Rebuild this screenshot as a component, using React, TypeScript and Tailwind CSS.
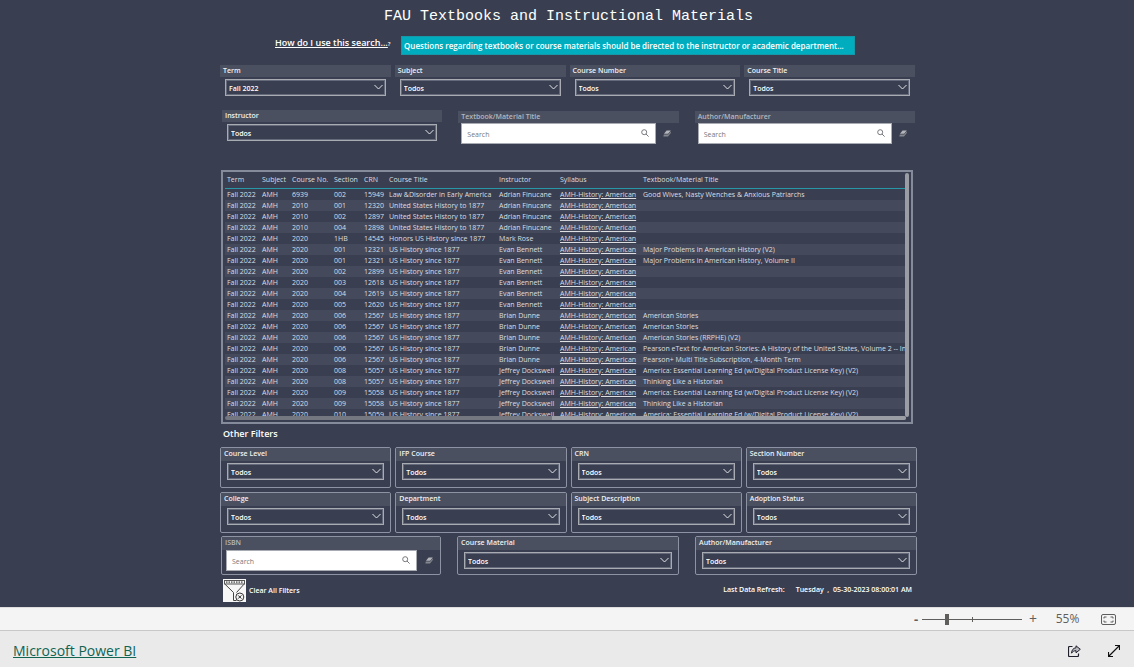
import React from 'react';

const NAV = ['Term', 'Subject', 'Course No.', 'Section', 'CRN', 'Course Title', 'Instructor', 'Syllabus', 'Textbook/Material Title'];

const US = 'US History since 1877';
const UNITED = 'United States History to 1877';
const ESSENTIAL = 'America: Essential Learning Ed (w/Digital Product License Key) (V2)';

// course no, section, crn, course title, instructor, material
const rows = [
  ['6939', '002', '15949', 'Law &Disorder in Early America', 'Adrian Finucane', 'Good Wives, Nasty Wenches & Anxious Patriarchs'],
  ['2010', '001', '12320', UNITED, 'Adrian Finucane', ''],
  ['2010', '002', '12897', UNITED, 'Adrian Finucane', ''],
  ['2010', '004', '12898', UNITED, 'Adrian Finucane', ''],
  ['2020', '1HB', '14545', 'Honors US History since 1877', 'Mark Rose', ''],
  ['2020', '001', '12321', US, 'Evan Bennett', 'Major Problems in American History (V2)'],
  ['2020', '001', '12321', US, 'Evan Bennett', 'Major Problems in American History, Volume II'],
  ['2020', '002', '12899', US, 'Evan Bennett', ''],
  ['2020', '003', '12618', US, 'Evan Bennett', ''],
  ['2020', '004', '12619', US, 'Evan Bennett', ''],
  ['2020', '005', '12620', US, 'Evan Bennett', ''],
  ['2020', '006', '12567', US, 'Brian Dunne', 'American Stories'],
  ['2020', '006', '12567', US, 'Brian Dunne', 'American Stories'],
  ['2020', '006', '12567', US, 'Brian Dunne', 'American Stories (RRPHE) (V2)'],
  ['2020', '006', '12567', US, 'Brian Dunne', 'Pearson eText for American Stories: A History of the United States, Volume 2 -- Instant Access'],
  ['2020', '006', '12567', US, 'Brian Dunne', 'Pearson+ Multi Title Subscription, 4-Month Term'],
  ['2020', '008', '15057', US, 'Jeffrey Dockswell', ESSENTIAL],
  ['2020', '008', '15057', US, 'Jeffrey Dockswell', 'Thinking Like a Historian'],
  ['2020', '009', '15058', US, 'Jeffrey Dockswell', ESSENTIAL],
  ['2020', '009', '15058', US, 'Jeffrey Dockswell', 'Thinking Like a Historian'],
  ['2020', '010', '15059', US, 'Jeffrey Dockswell', ESSENTIAL],
];

const Dropdown = ({ id, value = 'Todos' }: { id: string; value?: string }) => (
  <div className="relative">
    <select
      id={id}
      defaultValue={value}
      className="block h-[17px] w-full appearance-none border border-[#a9abb3] bg-[#393f50] pt-px pl-[3px] text-[7px] leading-[13px] font-semibold text-white shadow-[inset_0_0_0_1px_#646a79]"
    >
      <option>{value}</option>
    </select>
    <svg className="pointer-events-none absolute top-[5px] right-[3px] h-[6px] w-[9px]" viewBox="0 0 9 6" fill="none" stroke="#e4e5e8">
      <path d="M0.5 1l4 4 4-4" />
    </svg>
  </div>
);

const Eraser = () => (
  <svg className="h-[7px] w-[8px]" viewBox="0 0 8 7">
    <path d="M3.6 0.4h4.2L5.2 3.8H1z" fill="#b4b5ba" />
    <path d="M0.8 4.4h4.5L7.8 1.2v1.7L5 6.5H0.4z" fill="#85878f" />
  </svg>
);

const SearchBox = ({ id }: { id: string }) => (
  <div className="flex items-center">
    <div className="relative flex-1">
      <input
        id={id}
        type="text"
        placeholder="Search"
        className="block h-[21px] w-full border border-[#a9abb3] bg-white pt-[2px] pl-[5px] text-[7px] text-[#605e5c] placeholder-[#77787c]"
      />
      <svg className="pointer-events-none absolute top-[6px] right-[7px] h-[8px] w-[8px]" viewBox="0 0 8 8" fill="none" stroke="#77797e">
        <circle cx="3.2" cy="3.2" r="2.5" />
        <path d="M5 5l2.6 2.6" />
      </svg>
    </div>
    <button type="button" aria-label="Clear" className="flex w-[23px] items-center justify-center">
      <Eraser />
    </button>
  </div>
);

const Filter = ({ id, label, value }: { id: string; label: string; value?: string }) => (
  <div>
    <label htmlFor={id} className="block h-[12px] bg-[#4a5060] pl-[3px] text-[7px] leading-[12px] font-semibold text-[#f0f0f2]">{label}</label>
    <div className="mx-[5px] mt-[2px]">
      <Dropdown id={id} value={value} />
    </div>
  </div>
);

const SearchFilter = ({ id, label }: { id: string; label: string }) => (
  <div className="pt-px">
    <label htmlFor={id} className="block h-[12px] bg-[#4a5060] pl-[3px] text-[7px] leading-[12px] font-semibold text-[#b5b8bf]">{label}</label>
    <div className="pl-[3px]">
      <SearchBox id={id} />
    </div>
  </div>
);

const Card = ({ id, label, search }: { id: string; label: string; search?: boolean }) => (
  <div className="h-full rounded-[2px] border border-[#8d93a3]">
    <label
      htmlFor={id}
      className={`block h-[13px] bg-[#4a5060] pl-[3px] text-[7px] leading-[12px] font-semibold ${search ? 'text-[#b5b8bf]' : 'text-[#f0f0f2]'}`}
    >
      {label}
    </label>
    {search ? (
      <div className="pb-[3px] pl-[4px]"><SearchBox id={id} /></div>
    ) : (
      <div className="mx-[6px] mt-[2px]"><Dropdown id={id} /></div>
    )}
  </div>
);

const MaterialsTable = () => (
  <div className="relative h-[254px] border-2 border-[#858b9b] pt-px pr-[5px] pl-[2px]">
    <div className="h-[243px] overflow-hidden">
      <table className="w-full table-fixed text-left text-[7px] text-[#dddee1]">
        <colgroup>
          <col className="w-[35px]" />
          <col className="w-[30px]" />
          <col className="w-[42px]" />
          <col className="w-[30px]" />
          <col className="w-[25px]" />
          <col className="w-[110px]" />
          <col className="w-[61px]" />
          <col className="w-[83px]" />
          <col />
        </colgroup>
        <thead>
          <tr>
            {NAV.map(h => (
              <th key={h} className="h-[15px] border-b border-[#2897a8] p-0 pb-px pl-[2px] font-medium leading-[13px] whitespace-nowrap">{h}</th>
            ))}
          </tr>
        </thead>
        <tbody>
          {rows.map(([no, section, crn, title, instructor, material], i) => (
            <tr key={i} className="leading-[11px] whitespace-nowrap even:bg-[#444a5b]">
              <td className="p-0 pl-[2px]">Fall 2022</td>
              <td className="p-0 pl-[2px]">AMH</td>
              <td className="p-0 pl-[2px]">{no}</td>
              <td className="p-0 pl-[2px]">{section}</td>
              <td className="p-0 pl-[2px]">{crn}</td>
              <td className="p-0 pl-[2px]">{title}</td>
              <td className="p-0 pl-[2px]">{instructor}</td>
              <td className="p-0 pl-[2px]">
                <a href="#syllabus" className="underline">AMH-History: American</a>
              </td>
              <td className="overflow-hidden p-0 pl-[2px]">{material}</td>
            </tr>
          ))}
        </tbody>
      </table>
    </div>
    {/* scrollbars */}
    <div className="absolute top-px right-[2px] bottom-[5px] w-[4px] rounded-full bg-[#9b9da5]" />
    <div className="absolute right-[5px] bottom-[2px] left-[2px] flex h-[4px] overflow-hidden rounded-full bg-[#747780]">
      <div className="ml-auto w-[52%] bg-[#9b9da5]" />
    </div>
  </div>
);

const ClearFiltersIcon = () => (
  <svg className="h-[23px] w-[23px]" viewBox="0 0 23 23" fill="none">
    <rect width="23" height="23" fill="#f7f7f7" />
    <rect x="1.5" y="1.5" width="20" height="3.5" stroke="#555" />
    <path d="M3 3.3h17" stroke="#777" strokeWidth="2" strokeDasharray="1.5 1" />
    <path d="M2 5.2l8.5 8.3v8h3M21 5.2l-7.5 8.3" stroke="#444" />
    <circle cx="16.8" cy="18" r="4" fill="#f7f7f7" stroke="#333" />
    <path d="M15.2 16.4l3.2 3.2M18.4 16.4l-3.2 3.2" stroke="#222" />
  </svg>
);

export default function App() {
  return (
    <div className="flex min-h-screen flex-col bg-[#eaeaea] font-['Open_Sans','Noto_Sans',sans-serif]">
      <main className="bg-[#393f50] pb-[5px]">
        <div className="mx-auto w-full max-w-[704px] pr-[2px] pl-[5px]">
          <h1 className="pt-[7px] text-center font-['Courier_New','Liberation_Mono',monospace] text-[15px] leading-5 text-white">
            FAU Textbooks and Instructional Materials
          </h1>
          <div className="mt-[9px] flex items-center pl-[55px]">
            <a href="#help" className="w-[126px] pb-[4px] text-[9px] leading-[14px] font-semibold whitespace-nowrap text-white">
              <span className="underline">How do I use this search...</span><span className="text-[6px]">?</span>
            </a>
            <p className="w-[454px] border border-[#1599a9] bg-[#00adbe] pl-[2px] text-[8px] leading-[17px] font-semibold whitespace-nowrap text-white">
              Questions regarding textbooks or course materials should be directed to the instructor or academic department...
            </p>
          </div>

          <div className="mt-[10px] mr-[2px] grid grid-cols-4 gap-1">
            <Filter id="term" label="Term" value="Fall 2022" />
            <Filter id="subject" label="Subject" />
            <Filter id="course-number" label="Course Number" />
            <Filter id="course-title" label="Course Title" />
          </div>
          <div className="mt-[14px] mr-[2px] ml-[2px] grid grid-cols-3 gap-4">
            <Filter id="instructor" label="Instructor" />
            <SearchFilter id="material-title" label="Textbook/Material Title" />
            <SearchFilter id="author" label="Author/Manufacturer" />
          </div>

          <div className="mt-[26px] mr-[4px] ml-px">
            <MaterialsTable />
          </div>

          <h2 className="mt-[3px] pl-[3px] text-[9px] leading-[14px] font-semibold text-white">Other Filters</h2>
          <div className="mt-[6px] grid auto-rows-[41px] grid-cols-4 gap-1">
            <Card id="course-level" label="Course Level" />
            <Card id="ifp" label="IFP Course" />
            <Card id="crn" label="CRN" />
            <Card id="section" label="Section Number" />
            <Card id="college" label="College" />
            <Card id="department" label="Department" />
            <Card id="subject-description" label="Subject Description" />
            <Card id="adoption" label="Adoption Status" />
          </div>
          <div className="mt-[3px] ml-px grid grid-cols-[220fr_222fr_222fr] gap-4">
            <Card id="isbn" label="ISBN" search />
            <Card id="course-material" label="Course Material" />
            <Card id="author-list" label="Author/Manufacturer" />
          </div>

          <div className="mt-1 flex items-center justify-between pr-[5px] pl-[3px] text-[7px] font-semibold text-white">
            <button type="button" className="flex items-center gap-[3px]">
              <ClearFiltersIcon />
              <span className="pt-[2px]">Clear All Filters</span>
            </button>
            <div className="flex gap-[11px]">
              <span>Last Data Refresh:</span>
              <span className="whitespace-pre">Tuesday  ,  05-30-2023 08:00:01 AM</span>
            </div>
          </div>
        </div>
      </main>

      <div className="flex h-[24px] items-center justify-end border-t border-b border-t-[#dedede] border-b-[#c8c8c8] bg-[#f4f4f4] pr-[18px] text-[#605e5c]">
        <button type="button" aria-label="Zoom out" className="w-[10px] text-[13px] leading-4 font-bold">-</button>
        <div className="relative mx-px h-[12px] w-[100px]">
          <input type="range" aria-label="Zoom" min="10" max="400" defaultValue="55" className="absolute inset-0 w-full opacity-0" />
          <div className="pointer-events-none absolute top-[6px] h-px w-full bg-[#605e5c]" />
          <div className="pointer-events-none absolute top-[4px] left-1/2 h-[5px] w-px bg-[#605e5c]" />
          <div className="pointer-events-none absolute top-px left-[23px] h-[11px] w-[4px] bg-[#605e5c]" />
        </div>
        <button type="button" aria-label="Zoom in" className="w-5 text-[14px] leading-4">+</button>
        <span className="w-[49px] text-center text-[12px]">55%</span>
        <button type="button" aria-label="Fit to page" className="ml-[9px]">
          <svg className="h-[11px] w-[15px]" viewBox="0 0 15 11" fill="none" stroke="#605e5c">
            <rect x="0.5" y="0.5" width="14" height="10" rx="1.5" />
            <path d="M5.5 3H3v1.5M9.500 3H12v1.5M5.500 8H3V6.500M9.500 8H12V6.500" />
          </svg>
        </button>
      </div>

      <footer className="flex flex-1 items-center justify-between pt-1 pr-[14px] pl-[13px]">
        <a href="#powerbi" className="text-[14px] leading-5 text-[#0f6454] underline">Microsoft Power BI</a>
        <div className="flex items-center gap-[27px]">
          <button type="button" aria-label="Share">
            <svg className="h-[12px] w-[13px]" viewBox="0 0 13 12" fill="none" stroke="#1f1f2b">
              <path d="M4.5 1.5h-3a1 1 0 0 0-1 1v8a1 1 0 0 0 1 1h8a1 1 0 0 0 1-1V8.5" strokeWidth="1.2" />
              <path d="M8 0.8l4.3 3.500L8 7.800V5.700C6 5.700 4.600 6.500 3.500 8.200 3.700 5.200 5.200 3 8 2.800z" fill="#b9b9c0" />
            </svg>
          </button>
          <button type="button" aria-label="Full screen">
            <svg className="h-[12px] w-[12px]" viewBox="0 0 12 12" fill="none" stroke="#111" strokeWidth="1.2">
              <path d="M0.5 11.5l11-11M7 0.5h4.500V5M0.500 7v4.500H5" />
            </svg>
          </button>
        </div>
      </footer>
    </div>
  );
}
